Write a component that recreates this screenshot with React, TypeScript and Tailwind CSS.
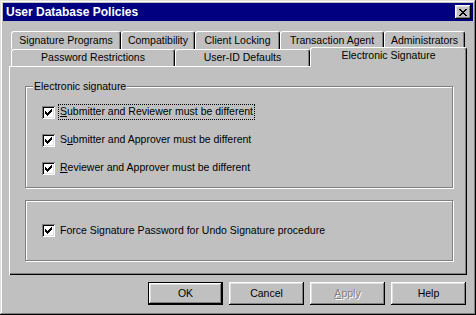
import React from 'react';

const bevel =
  'shadow-[inset_-1px_-1px_#000,inset_1px_1px_#fff,inset_-2px_-2px_#808080,inset_2px_2px_#dfdfdf]';

const backTabs = [
  { label: 'Signature Programs', w: 'w-[110px]' },
  { label: 'Compatibility', w: 'w-[74px]' },
  { label: 'Client Locking', w: 'w-[85px]' },
  { label: 'Transaction Agent', w: 'w-[104px]' },
  { label: 'Administrators', w: 'w-[81px]' },
];

const frontTabs = [
  { label: 'Password Restrictions', w: 'w-[164px]' },
  { label: 'User-ID Defaults', w: 'w-[135px]' },
];

function Tab({ label, w }: { label: string; w: string }) {
  return (
    <div
      className={`${w} h-full flex items-center justify-center border-t border-l border-r border-white border-r-black rounded-t-[3px] shadow-[inset_-1px_0_#808080] whitespace-nowrap`}
    >
      {label}
    </div>
  );
}

function Check() {
  return (
    <span className="w-[13px] h-[13px] shrink-0 bg-white flex items-center justify-center shadow-[inset_1px_1px_#808080,inset_-1px_-1px_#fff,inset_2px_2px_#000,inset_-2px_-2px_#dfdfdf]">
      <svg width="7" height="7" viewBox="0 0 7 7" shapeRendering="crispEdges">
        <path
          fill="#000"
          d="M6 0h1v1h-1z M5 1h2v1h-2z M0 2h1v1h-1z M4 2h3v1h-3z M0 3h2v1h-2z M3 3h3v1h-3z M0 4h5v1h-5z M1 5h3v1h-3z M2 6h1v1h-1z"
        />
      </svg>
    </span>
  );
}

function CheckRow({ children, focus }: { children: React.ReactNode; focus?: boolean }) {
  return (
    <div className="h-[16px] flex items-center gap-[3px]">
      <Check />
      <span
        className={`h-[16px] flex items-center px-[1px] whitespace-nowrap border ${
          focus ? 'border-dotted border-black' : 'border-transparent'
        }`}
      >
        {children}
      </span>
    </div>
  );
}

function Button({ children, main }: { children: React.ReactNode; main?: boolean }) {
  return (
    <div
      className={`w-[75px] h-[23px] flex items-center justify-center ${bevel} ${
        main ? 'border border-black' : ''
      }`}
    >
      {children}
    </div>
  );
}

export default function App() {
  return (
    <div className="w-[476px] h-[315px] bg-[#c0c0c0] p-[3px] flex flex-col text-black text-[10.5px] font-['Liberation_Sans',Arial,sans-serif] shadow-[inset_-1px_-1px_#000,inset_1px_1px_#dfdfdf,inset_-2px_-2px_#808080,inset_2px_2px_#fff]">
      <div className="h-[18px] bg-[#000080] flex items-center justify-between pl-[3px] pr-[2px]">
        <span className="text-white font-bold text-[12px]">User Database Policies</span>
        <div className={`w-[16px] h-[14px] bg-[#c0c0c0] flex items-center justify-center ${bevel}`}>
          <svg width="8" height="7" viewBox="0 0 8 7" shapeRendering="crispEdges">
            <path
              fill="#000"
              d="M0 0h2v1h-2z M6 0h2v1h-2z M1 1h2v1h-2z M5 1h2v1h-2z M2 2h4v1h-4z M3 3h2v1h-2z M2 4h4v1h-4z M1 5h2v1h-2z M5 5h2v1h-2z M0 6h2v1h-2z M6 6h2v1h-2z"
            />
          </svg>
        </div>
      </div>

      <div className="flex-1 flex flex-col px-[6px] pt-[10px]">
        <div className="h-[18px] flex pl-[2px]">
          {backTabs.map((t) => (
            <Tab key={t.label} label={t.label} w={t.w} />
          ))}
        </div>
        <div className="h-[17px] flex pl-[2px]">
          {frontTabs.map((t) => (
            <Tab key={t.label} label={t.label} w={t.w} />
          ))}
          <div className="relative -top-[2px] z-10 w-[157px] h-[20px] pb-[3px] bg-[#c0c0c0] flex items-center justify-center border-t border-l border-r border-white border-r-black rounded-t-[3px] shadow-[inset_-1px_0_#808080]">
            Electronic Signature
          </div>
        </div>

        <div className="h-[209px] flex flex-col gap-[12px] pl-[16px] pr-[14px] pt-[20px] shadow-[inset_1px_1px_#fff,inset_-1px_-1px_#000,inset_-2px_-2px_#808080]">
          <div className="relative h-[102px] flex flex-col gap-[12px] pl-[16px] pt-[17px] border border-[#808080] shadow-[inset_1px_1px_#fff,1px_1px_#fff]">
            <span className="absolute -top-[8px] left-[7px] px-[1px] bg-[#c0c0c0] leading-[14px]">
              Electronic signature
            </span>
            <CheckRow focus>
              <span className="underline">S</span>ubmitter and Reviewer must be different
            </CheckRow>
            <CheckRow>
              S<span className="underline">u</span>bmitter and Approver must be different
            </CheckRow>
            <CheckRow>
              <span className="underline">R</span>eviewer and Approver must be different
            </CheckRow>
          </div>

          <div className="h-[61px] flex items-center pl-[16px] border border-[#808080] shadow-[inset_1px_1px_#fff,1px_1px_#fff]">
            <CheckRow>Force Signature Password for Undo Signature procedure</CheckRow>
          </div>
        </div>

        <div className="flex justify-end gap-[6px] mt-[7px] pr-[1px]">
          <Button main>OK</Button>
          <Button>Cancel</Button>
          <Button>
            <span className="text-[#808080] [text-shadow:1px_1px_#fff]">
              <span className="underline">A</span>pply
            </span>
          </Button>
          <Button>Help</Button>
        </div>
      </div>
    </div>
  );
}
